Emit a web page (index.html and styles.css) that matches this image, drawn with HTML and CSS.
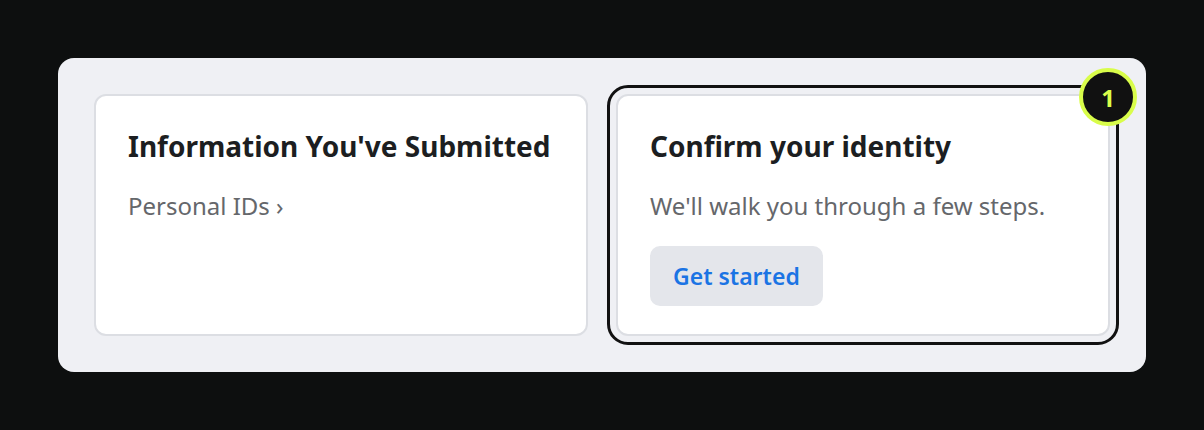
FILE: index.html
```html
<!DOCTYPE html>
<html>
<head>
<meta charset="utf-8">
<link rel="stylesheet" href="styles.css">
</head>
<body>
<div class="panel">
  <div class="card">
    <h2 class="title">Information You've Submitted</h2>
    <p class="sub">Personal IDs ›</p>
  </div>
  <div class="card highlighted">
    <h2 class="title">Confirm your identity</h2>
    <p class="sub">We'll walk you through a few steps.</p>
    <button class="btn">Get started</button>
    <span class="badge">1</span>
  </div>
</div>
</body>
</html>
```
FILE: styles.css
```css
html, body {
  margin: 0;
  padding: 0;
  background: #0d0f0f;
}
body {
  padding: 58px;
  font-family: "Noto Sans", "Open Sans", sans-serif;
}
.panel {
  width: 1088px;
  height: 314px;
  box-sizing: border-box;
  background: #eff0f4;
  border-radius: 16px;
  padding: 36px;
  display: grid;
  grid-template-columns: 494px 494px;
  column-gap: 28px;
}
.card {
  position: relative;
  min-width: 0;
  box-sizing: border-box;
  height: 242px;
  background: #fff;
  border: 2px solid #dcdee3;
  border-radius: 12px;
  padding: 33px 32px;
}
.highlighted {
  outline: 3px solid #111;
  outline-offset: 6px;
}
.title {
  margin: 0;
  font-size: 28px;
  line-height: 34px;
  font-weight: 700;
  color: #1c1e21;
  white-space: nowrap;
}
.sub {
  margin: 26px 0 0;
  font-size: 24px;
  line-height: 34px;
  color: #65676b;
  white-space: nowrap;
}
.btn {
  margin-top: 23px;
  height: 60px;
  padding: 0 23px;
  border: none;
  border-radius: 10px;
  background: #e4e6eb;
  color: #1b74e4;
  font-family: inherit;
  font-size: 23px;
  font-weight: 600;
}
.badge {
  position: absolute;
  top: -28px;
  right: -29px;
  width: 50px;
  height: 50px;
  border-radius: 50%;
  background: #111;
  border: 4px solid #d9fd4a;
  color: #d9fd4a;
  font-size: 24px;
  font-weight: 700;
  display: flex;
  align-items: center;
  justify-content: center;
}
```
